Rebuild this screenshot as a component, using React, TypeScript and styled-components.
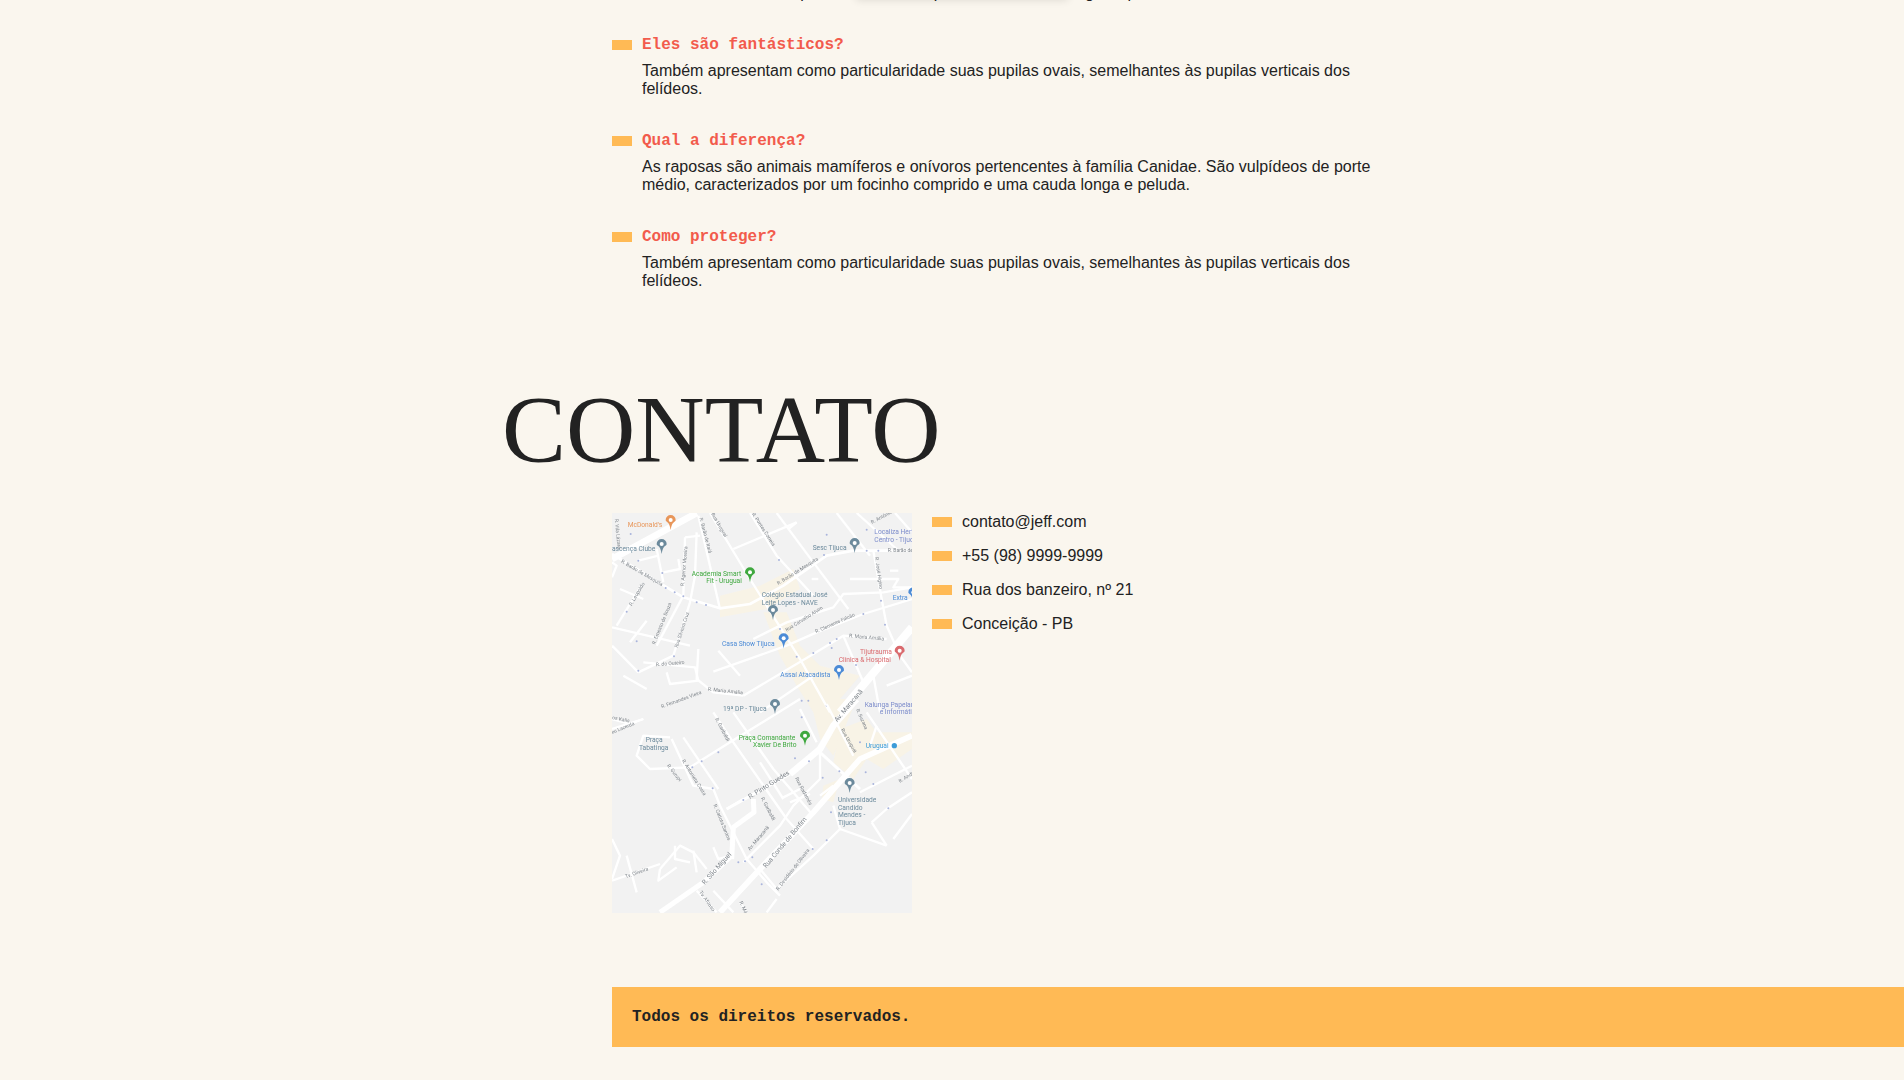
import React from 'react';
import styled, { createGlobalStyle } from 'styled-components';

const GlobalStyle = createGlobalStyle`
  html, body {
    margin: 0;
    padding: 0;
    background: #FAF6EE;
    overflow: hidden;
  }
  body {
    font-family: 'Liberation Sans', Arial, sans-serif;
    font-size: 16px;
    line-height: 18px;
    color: #222222;
  }
`;

// ── Scrolled-away paragraph, only the descenders still show ──────────────────

const IntroEdge = styled.div`
  position: relative;
  height: 2px;
  display: flex;
  align-items: flex-end;
  padding-left: 642px;
`;

const IntroLine = styled.p`
  margin: 0;
  white-space: nowrap;
`;

const IntroShadow = styled.div`
  position: absolute;
  top: -10px;
  left: 856px;
  width: 212px;
  height: 10px;
  box-shadow: 0 0 8px rgba(0, 0, 0, 0.12);
`;

// ── Q&A list ─────────────────────────────────────────────────────────────────

const QuestionList = styled.ul`
  list-style: none;
  margin: 34px 0 0;
  padding: 0 0 0 612px;
  display: flex;
  flex-direction: column;
  gap: 34px;
`;

const Question = styled.li`
  display: grid;
  grid-template-columns: 20px 1fr;
  column-gap: 10px;
  row-gap: 8px;
  width: 770px;
`;

const Marker = styled.span`
  display: block;
  width: 20px;
  height: 10px;
  background: #FFBA55;
  align-self: center;
`;

const QuestionTitle = styled.h3`
  margin: 0;
  font-family: 'Liberation Mono', monospace;
  font-size: 16px;
  line-height: 18px;
  font-weight: 700;
  color: #F25B4C;
`;

const QuestionText = styled.p`
  grid-column: 2;
  margin: 0;
`;

// ── Contact ──────────────────────────────────────────────────────────────────

const ContactSection = styled.section`
  margin-top: 85px;
  padding-left: 502px;
`;

const ContactHeading = styled.h1`
  margin: 0;
  font-family: 'Liberation Serif', 'Times New Roman', serif;
  font-size: 96px;
  line-height: 110px;
  font-weight: 400;
  color: #222222;
`;

const ContactBody = styled.div`
  display: flex;
  gap: 20px;
  margin: 28px 0 0 110px;
`;

const MapFrame = styled.svg`
  display: block;
  width: 300px;
  height: 400px;
  background: #F2F2F2;
  filter: blur(0.35px);
`;

const ContactList = styled.ul`
  list-style: none;
  margin: 0;
  padding: 0;
  display: flex;
  flex-direction: column;
  gap: 16px;
`;

const ContactItem = styled.li`
  display: flex;
  align-items: center;
  gap: 10px;
`;

const Footer = styled.footer`
  margin: 74px 0 0 612px;
  height: 60px;
  display: flex;
  align-items: center;
  padding-left: 20px;
  background: #FFBA55;
  font-family: 'Liberation Mono', monospace;
  font-weight: 700;
  color: #222222;
`;

// ── Map drawing ──────────────────────────────────────────────────────────────

const tones: Record<string, string> = {
  orange: '#E8965A',
  slate: '#6C8A9C',
  green: '#3FA83F',
  blue: '#4C8BD6',
  red: '#DA6A6E',
  violet: '#7C8CCB',
  cyan: '#3B9BD8',
  road: '#7F858B',
};

const MapLabel = styled.text<{ $tone: string; $size?: number }>`
  font-family: Roboto, 'Liberation Sans', sans-serif;
  font-size: ${({ $size }) => $size ?? 20}px;
  fill: ${({ $tone }) => tones[$tone]};
`;

const Road = styled.polyline<{ $w?: number }>`
  fill: none;
  stroke: #FFFFFF;
  stroke-width: ${({ $w }) => $w ?? 7}px;
  stroke-linejoin: round;
`;

const Land = styled.polygon`
  fill: #F8F3E6;
`;

const OneWayDot = styled.circle`
  fill: #A9B4DC;
`;

const Pin = ({ x, y, tone }: { x: number; y: number; tone: string }) => (
  <g transform={`translate(${x} ${y})`}>
    <path d="M0 20C-4-8-15-3-15-10a15 15 0 1 1 30 0C15-3 4-8 0 20Z" fill={tones[tone]} transform="translate(0 -2)" />
    <circle cx="0" cy="-12" r="6" fill="#FFFFFF" />
  </g>
);

const upperRoads: [string, number?][] = [
  ['36,165 250,295 360,328 450,315 550,260 680,170 760,155 936,155', 8],
  ['330,42 450,240 600,480 690,640'],
  ['450,42 530,170 640,290'],
  ['530,42 640,190 700,270 745,330'],
  ['710,42 810,170'],
  ['770,42 890,150'],
  ['885,42 936,100'],
  ['820,155 845,300 860,380 900,470 936,520'],
  ['295,50 360,330'],
  ['255,115 300,110'],
  ['255,115 250,290'],
  ['290,100 285,230 270,310 220,470 115,520'],
  ['400,150 590,70'],
  ['565,90 590,70'],
  ['340,518 560,440 650,400 790,345 936,300'],
  ['460,420 560,370 700,325 730,285 850,280 936,265'],
  ['430,590 640,465 730,410 860,420'],
  ['730,410 790,550'],
  ['170,440 250,290'],
  ['130,250 50,380'],
  ['36,385 270,440'],
  ['115,520 36,440'],
  ['140,365 90,430'],
  ['130,490 285,505 295,545 210,555 200,520'],
  ['295,450 290,540 340,580 430,590'],
  ['70,530 140,570'],
  ['355,455 420,530'],
  ['170,150 190,250'],
  ['115,185 175,170'],
  ['190,220 240,210 235,180'],
  ['60,270 130,300'],
  ['750,240 895,240 880,265 936,265'],
  ['635,240 655,240'],
  ['870,215 895,215'],
  ['860,560 936,530'],
  ['840,640 820,530'],
  ['480,640 640,530'],
  ['36,235 50,200 36,190'],
];

const lowerRoads: [string, number?][] = [
  ['600,0 390,130 270,205 150,210 110,170 130,110 210,115'],
  ['340,40 400,130 560,360 640,450'],
  ['400,40 520,210 640,350'],
  ['600,30 650,130'],
  ['680,15 760,170'],
  ['215,120 280,260 340,270 360,320 440,480 500,550 540,590'],
  ['250,115 355,270'],
  ['430,490 540,380 580,320 660,240 660,150'],
  ['36,90 130,60'],
  ['36,420 60,470 36,540'],
  ['180,510 240,440 280,460 320,510'],
  ['80,470 110,580'],
  ['36,545 180,495'],
  ['280,455 290,520'],
  ['480,510 530,570 640,470 720,390 860,440'],
  ['700,320 720,390'],
  ['780,280 936,200'],
  ['815,370 860,330 936,280'],
  ['815,370 860,440'],
  ['800,40 936,240'],
  ['830,80 810,140'],
  ['290,575 350,640'],
  ['340,575 400,640'],
  ['420,610 440,640'],
  ['500,640 530,600'],
  ['380,330 430,300'],
  ['480,190 550,300'],
  ['550,295 600,270'],
  ['660,160 780,270', 9],
  ['570,310 630,285'],
  ['936,345 880,420'],
  ['660,290 700,260'],
  ['36,60 90,75 130,60'],
  ['180,510 175,545 230,505'],
  ['225,440 225,480 270,490'],
  ['340,445 355,480 395,470'],
];

const upperDots = [
  [92, 105], [115, 185], [187, 222], [197, 267], [224, 280], [250, 292], [290, 310], [318, 318],
  [110, 427], [80, 338], [115, 515], [222, 472], [540, 390], [590, 473], [640, 462], [690, 432],
  [695, 447], [710, 420], [790, 345], [855, 377], [843, 305], [835, 155], [800, 155], [680, 107],
  [672, 168], [537, 183], [625, 605], [680, 620], [800, 92], [768, 498],
];

const lowerDots = [
  [605, 5], [605, 55], [355, 160], [305, 187], [277, 205], [338, 268], [430, 303], [585, 178],
  [627, 187], [668, 236], [718, 217], [797, 220], [820, 255], [865, 328], [693, 340], [638, 450],
  [680, 424], [485, 556], [435, 487], [457, 475], [415, 490], [780, 130],
];

const MapPicture = () => (
  <MapFrame viewBox="36 42 900 1200" role="img" aria-label="Mapa da Tijuca">
    <Land points="360,290 480,260 580,210 600,270 500,330 360,355" />
    <Land points="490,340 560,340 600,440 660,500 780,530 720,600 640,640 590,560 540,470" />
    <g transform="translate(0 600)">
      <Land points="630,0 770,0 700,170 660,120" />
      <Land points="720,90 800,60 830,100 936,100 936,150 850,210 800,180 760,240 700,190" />
      <Land points="670,260 720,240 700,310 665,300" />
    </g>

    {upperRoads.map(([points, w]) => (
      <Road key={points} points={points} $w={w} />
    ))}
    <Road points="36,180 290,42" $w={20} />
    <Road points="936,385 720,640" $w={24} />
    {upperDots.map(([x, y]) => (
      <OneWayDot key={`${x}-${y}`} cx={x} cy={y} r={3} />
    ))}

    <g transform="translate(0 600)">
      {lowerRoads.map(([points, w]) => (
        <Road key={points} points={points} $w={w} />
      ))}
      <Road points="770,0 700,80 660,150 570,225" $w={20} />
      <Road points="570,225 380,330" $w={9} />
      <Road points="460,300 462,340 400,385 395,480" $w={15} />
      <Road points="936,110 780,180 640,340 480,510 360,640" $w={17} />
      <Road points="395,470 310,550 180,640" $w={15} />
      {lowerDots.map(([x, y]) => (
        <OneWayDot key={`${x}-${y}`} cx={x} cy={y} r={3} />
      ))}
    </g>

    <MapLabel $tone="orange" x="83" y="83">McDonald's</MapLabel>
    <Pin x={212} y={75} tone="orange" />
    <MapLabel $tone="slate" x="36" y="155">ascença Clube</MapLabel>
    <Pin x={185} y={147} tone="slate" />
    <MapLabel $tone="green" x="275" y="230">Academia Smart</MapLabel>
    <MapLabel $tone="green" x="319" y="252">Fit - Uruguai</MapLabel>
    <Pin x={450} y={232} tone="green" />
    <MapLabel $tone="slate" x="485" y="295">Colégio Estadual José</MapLabel>
    <MapLabel $tone="slate" x="485" y="318">Leite Lopes - NAVE</MapLabel>
    <Pin x={519} y={345} tone="slate" />
    <MapLabel $tone="slate" x="638" y="152">Sesc Tijuca</MapLabel>
    <Pin x={764} y={144} tone="slate" />
    <MapLabel $tone="violet" x="823" y="105">Localiza Hertz</MapLabel>
    <MapLabel $tone="violet" x="823" y="128">Centro - Tijuca</MapLabel>
    <MapLabel $tone="blue" x="878" y="303">Extra</MapLabel>
    <Pin x={940} y={292} tone="blue" />
    <MapLabel $tone="blue" x="366" y="440">Casa Show Tijuca</MapLabel>
    <Pin x={551} y={430} tone="blue" />
    <MapLabel $tone="red" x="780" y="466">Tijutrauma</MapLabel>
    <MapLabel $tone="red" x="716" y="488">Clínica & Hospital</MapLabel>
    <Pin x={899} y={467} tone="red" />
    <MapLabel $tone="blue" x="541" y="533">Assaí Atacadista</MapLabel>
    <Pin x={717} y={525} tone="blue" />

    <MapLabel $tone="road" $size={15} transform="translate(62 190) rotate(30)">R. Barão de Mesquita</MapLabel>
    <MapLabel $tone="road" $size={15} transform="translate(535 258) rotate(-32)">R. Barão de Mesquita</MapLabel>
    <MapLabel $tone="road" $size={15} transform="translate(298 58) rotate(75)">R. Barão de Itaiá</MapLabel>
    <MapLabel $tone="road" $size={15} transform="translate(333 45) rotate(60)">Rua Uruguai</MapLabel>
    <MapLabel $tone="road" $size={15} transform="translate(455 45) rotate(57)">R. Pontes Correia</MapLabel>
    <MapLabel $tone="road" $size={15} transform="translate(252 262) rotate(-85)">R. Agenor Moreira</MapLabel>
    <MapLabel $tone="road" $size={15} transform="translate(165 437) rotate(-68)">R. Ernesto de Souza</MapLabel>
    <MapLabel $tone="road" $size={15} transform="translate(233 447) rotate(-72)">Rua Silveira Cruz</MapLabel>
    <MapLabel $tone="road" $size={15} transform="translate(95 322) rotate(-60)">R. Leopoldo</MapLabel>
    <MapLabel $tone="road" $size={15} transform="translate(168 502) rotate(-5)">R. do Outeiro</MapLabel>
    <MapLabel $tone="road" $size={15} transform="translate(323 575) rotate(6)">R. Maria Amália</MapLabel>
    <MapLabel $tone="road" $size={15} transform="translate(185 628) rotate(-20)">R. Fernandes Vieira</MapLabel>
    <MapLabel $tone="road" $size={15} transform="translate(560 398) rotate(-32)">Rua Carvalho Alvim</MapLabel>
    <MapLabel $tone="road" $size={15} transform="translate(648 403) rotate(-24)">R. Clemente Falcão</MapLabel>
    <MapLabel $tone="road" $size={15} transform="translate(747 415) rotate(5)">R. Maria Amália</MapLabel>
    <MapLabel $tone="road" $size={15} transform="translate(863 160)">R. Barão de Mesquita</MapLabel>
    <MapLabel $tone="road" $size={15} transform="translate(825 175) rotate(82)">R. José Higino</MapLabel>
    <MapLabel $tone="road" $size={15} transform="translate(816 75) rotate(-28)">R. Antônio</MapLabel>
    <MapLabel $tone="road" $size={15} transform="translate(44 60) rotate(84)">R. Vila Lázara</MapLabel>

    <g transform="translate(0 600)">
      <MapLabel $tone="violet" x="794" y="23">Kalunga Papelaria</MapLabel>
      <MapLabel $tone="violet" x="839" y="46">e Informática</MapLabel>
      <MapLabel $tone="slate" x="369" y="35">19ª DP - Tijuca</MapLabel>
      <Pin x={525} y={27} tone="slate" />
      <MapLabel $tone="green" x="416" y="122">Praça Comandante</MapLabel>
      <MapLabel $tone="green" x="459" y="145">Xavier De Brito</MapLabel>
      <Pin x={615} y={122} tone="green" />
      <MapLabel $tone="cyan" x="797" y="146">Uruguai</MapLabel>
      <circle cx="883" cy="140" r="8" fill={tones.cyan} />
      <MapLabel $tone="slate" x="137" y="129">Praça</MapLabel>
      <MapLabel $tone="slate" x="117" y="152">Tabatinga</MapLabel>
      <Pin x={749} y={264} tone="slate" />
      <MapLabel $tone="slate" x="714" y="309">Universidade</MapLabel>
      <MapLabel $tone="slate" x="714" y="332">Candido</MapLabel>
      <MapLabel $tone="slate" x="714" y="355">Mendes -</MapLabel>
      <MapLabel $tone="slate" x="714" y="378">Tijuca</MapLabel>

      <MapLabel $tone="road" $size={20} transform="translate(450 300) rotate(-32)">R. Pinto Guedes</MapLabel>
      <MapLabel $tone="road" $size={20} transform="translate(498 508) rotate(-50)">Rua Conde de Bonfim</MapLabel>
      <MapLabel $tone="road" $size={20} transform="translate(314 558) rotate(-48)">R. São Miguel</MapLabel>
      <MapLabel $tone="road" $size={20} transform="translate(712 70) rotate(-50)">Av. Maracanã</MapLabel>
      <MapLabel $tone="road" $size={15} transform="translate(345 60) rotate(62)">R. Garibaldi</MapLabel>
      <MapLabel $tone="road" $size={15} transform="translate(482 298) rotate(62)">R. Garibaldi</MapLabel>
      <MapLabel $tone="road" $size={15} transform="translate(200 200) rotate(52)">R. Gurupi</MapLabel>
      <MapLabel $tone="road" $size={15} transform="translate(245 185) rotate(58)">R. Antonieta Costa</MapLabel>
      <MapLabel $tone="road" $size={15} transform="translate(340 318) rotate(68)">R. Carlota Santos</MapLabel>
      <MapLabel $tone="road" $size={15} transform="translate(450 455) rotate(-50)">Av. Maracanã</MapLabel>
      <MapLabel $tone="road" $size={15} transform="translate(585 238) rotate(62)">Rua Radamés</MapLabel>
      <MapLabel $tone="road" $size={15} transform="translate(722 92) rotate(60)">Rua Uruguai</MapLabel>
      <MapLabel $tone="road" $size={15} transform="translate(768 32) rotate(66)">R. Suzana</MapLabel>
      <MapLabel $tone="road" $size={15} transform="translate(535 575) rotate(-52)">R. Desidério de Oliveira</MapLabel>
      <MapLabel $tone="road" $size={15} transform="translate(78 538) rotate(-20)">Tv. Oliveira</MapLabel>
      <MapLabel $tone="road" $size={15} transform="translate(297 580) rotate(55)">Tv. Afonso</MapLabel>
      <MapLabel $tone="road" $size={15} transform="translate(418 610) rotate(65)">R. Mário</MapLabel>
      <MapLabel $tone="road" $size={15} transform="translate(36 60) rotate(12)">os Kalis</MapLabel>
      <MapLabel $tone="road" $size={15} transform="translate(36 105) rotate(-22)">eu Lacerda</MapLabel>
      <MapLabel $tone="road" $size={15} transform="translate(900 252) rotate(-32)">R. Andrade</MapLabel>
    </g>
  </MapFrame>
);

const questions = [
  {
    title: 'Eles são fantásticos?',
    text: 'Também apresentam como particularidade suas pupilas ovais, semelhantes às pupilas verticais dos felídeos.',
  },
  {
    title: 'Qual a diferença?',
    text: 'As raposas são animais mamíferos e onívoros pertencentes à família Canidae. São vulpídeos de porte médio, caracterizados por um focinho comprido e uma cauda longa e peluda.',
  },
  {
    title: 'Como proteger?',
    text: 'Também apresentam como particularidade suas pupilas ovais, semelhantes às pupilas verticais dos felídeos.',
  },
];

const contacts = ['contato@jeff.com', '+55 (98) 9999-9999', 'Rua dos banzeiro, nº 21', 'Conceição - PB'];

export default function App() {
  return (
    <>
      <GlobalStyle />
      <IntroEdge>
        <IntroLine>Canis, animais de um porte médio então pouco visto e muito ágil ao pular</IntroLine>
        <IntroShadow />
      </IntroEdge>
      <QuestionList>
        {questions.map((q) => (
          <Question key={q.title}>
            <Marker />
            <QuestionTitle>{q.title}</QuestionTitle>
            <QuestionText>{q.text}</QuestionText>
          </Question>
        ))}
      </QuestionList>
      <ContactSection>
        <ContactHeading>CONTATO</ContactHeading>
        <ContactBody>
          <MapPicture />
          <ContactList>
            {contacts.map((c) => (
              <ContactItem key={c}>
                <Marker />
                {c}
              </ContactItem>
            ))}
          </ContactList>
        </ContactBody>
      </ContactSection>
      <Footer>Todos os direitos reservados.</Footer>
    </>
  );
}
